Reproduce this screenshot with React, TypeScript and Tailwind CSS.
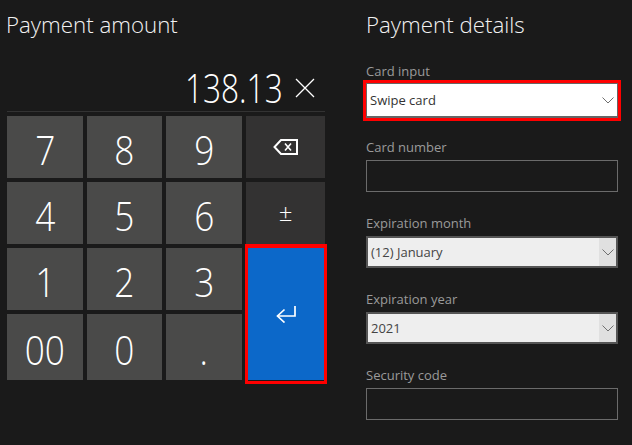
const font = { fontFamily: '"Open Sans", "Noto Sans", sans-serif' };

function Key({ label, tall }: { label: string; tall?: boolean }) {
  return (
    <div className={`flex items-center justify-center bg-[#4a4a49] text-[#ffffff] text-[40px] font-light ${tall ? "pt-[6px]" : "pt-[5px]"}`}>
      <span className="inline-block scale-x-[0.88]">{label}</span>
    </div>
  );
}

function Chevron() {
  return (
    <svg width="12" height="7" viewBox="0 0 12 7" fill="none" stroke="#6f6f6f" strokeWidth="1">
      <path d="M0.5 0.5 L6 6 L11.5 0.5" />
    </svg>
  );
}

function Field({ label, children }: { label: string; children: React.ReactNode }) {
  return (
    <div className="flex flex-col h-[76px]">
      <div className="text-[13px] leading-[17px] h-[17px] mt-[1px] mb-[4px] text-[#9a9a9a]">{label}</div>
      {children}
    </div>
  );
}

function TextBox() {
  return <div className="w-[252px] h-[32px] border border-[#6b6b6b]" />;
}

function GreySelect({ value }: { value: string }) {
  return (
    <div className="w-[252px] h-[32px] border-2 border-[#555555] bg-[#eeeeee] flex items-stretch">
      <div className="flex-1 flex items-center pl-[3px] pt-[2px] text-[13px] text-[#444444]">{value}</div>
      <div className="w-[17px] bg-[#e0e0e0] flex items-center justify-center"><Chevron /></div>
    </div>
  );
}

export default function App() {
  return (
    <div className="w-[632px] h-[445px] bg-[#1a1a1a] flex overflow-hidden" style={font}>
      <div className="w-[366px] pl-[7px] shrink-0">
        <div className="h-[52px] pt-[7px] ml-[-1px] text-[22.3px] leading-[36px] font-light text-[#f2f2f2]">Payment amount</div>
        <div className="w-[318px] h-[60px] border-b border-[#333333] flex items-center justify-end pr-[10px] pt-[12px] text-[40px] font-light text-white">
          <span className="inline-block scale-x-[0.79] origin-right">138.13</span>
          <svg className="ml-[12px]" width="20" height="20" viewBox="0 0 20 20" stroke="#ffffff" strokeWidth="1.3" fill="none">
            <path d="M1 1 L19 19 M19 1 L1 19" />
          </svg>
        </div>
        <div className="mt-[4px] grid grid-cols-[76px_75px_76px_79px] grid-rows-[62px_62px_62px_66px] gap-[4px] w-[318px]">
          <Key label="7" />
          <Key label="8" />
          <Key label="9" />
          <div className="bg-[#333232] flex items-center justify-center">
            <svg width="25" height="16" viewBox="0 0 25 16" fill="none" stroke="#ffffff" strokeWidth="2">
              <path d="M8 1 H24 V15 H8 L1.5 8 Z" />
              <path d="M12 4.5 L18 11.5 M18 4.5 L12 11.5" strokeWidth="1.6" />
            </svg>
          </div>
          <Key label="4" />
          <Key label="5" />
          <Key label="6" />
          <div className="bg-[#333232] flex items-center justify-center text-white text-[24px] font-light pb-[2px]">±</div>
          <Key label="1" />
          <Key label="2" />
          <Key label="3" />
          <div className="row-span-2 ml-[-1px] mr-[-2px] mt-[-4px] mb-[-4px] border-[3px] border-t-4 border-[#ff0000] bg-[#0c68c9] shadow-[inset_0_-1px_0_#1a1a1a] flex items-center justify-center">
            <svg width="20" height="17" viewBox="0 0 20 17" fill="none" stroke="#ffffff" strokeWidth="1.7">
              <path d="M19 0 V10 H1.5" />
              <path d="M8.5 3.5 L1.5 10 L8.5 16.5" />
            </svg>
          </div>
          <Key label="00" tall />
          <Key label="0" tall />
          <Key label="." tall />
        </div>
      </div>
      <div className="flex-1">
        <div className="h-[62px] pt-[7px] text-[22.3px] leading-[36px] font-light text-[#f2f2f2]">Payment details</div>
        <Field label="Card input">
          <div className="ml-[-3px] mt-[-4px] w-[258px] h-[41px] border-[3px] border-[#ff0000]">
            <div className="h-[35px] bg-white border-t border-b-2 border-x border-[#666666] flex items-center justify-between pl-[3px] pr-[3px] pt-[1px] text-[13px] text-[#333333]">
              <span>Swipe card</span>
              <Chevron />
            </div>
          </div>
        </Field>
        <Field label="Card number"><TextBox /></Field>
        <Field label="Expiration month"><GreySelect value="(12) January" /></Field>
        <Field label="Expiration year"><GreySelect value="2021" /></Field>
        <Field label="Security code"><TextBox /></Field>
      </div>
    </div>
  );
}
